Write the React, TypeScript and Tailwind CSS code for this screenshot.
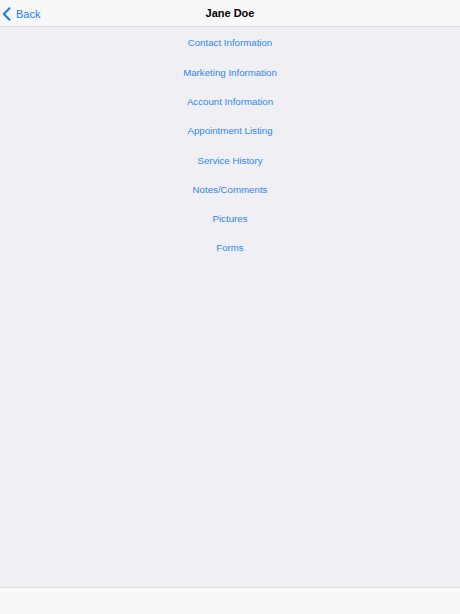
const items = [
  'Contact Information',
  'Marketing Information',
  'Account Information',
  'Appointment Listing',
  'Service History',
  'Notes/Comments',
  'Pictures',
  'Forms',
];

export default function App() {
  return (
    <div className="flex h-[614px] w-[460px] flex-col bg-[#efeff4] font-['Liberation_Sans',Arial,sans-serif]">
      {/* Nav bar */}
      <div className="relative flex h-[27px] shrink-0 items-center justify-center border-b border-[#dcdcde] bg-[#f8f8f8] pt-[1px]">
        <button className="absolute left-[2px] top-[1px] flex h-[26px] items-center gap-[5px] text-[11px] text-[#1a7cf5]">
          <svg width="9" height="14" viewBox="0 0 9 14" fill="none">
            <path d="M7.5 1.2 1.8 7l5.7 5.8" stroke="#1a7cf5" strokeWidth="2" strokeLinecap="round" strokeLinejoin="round" />
          </svg>
          Back
        </button>
        <span className="text-[11px] font-bold text-black">Jane Doe</span>
      </div>

      {/* Menu list */}
      <div className="flex flex-1 flex-col items-center pt-[2px]">
        {items.map((label) => (
          <div key={label} className="flex h-[29.3px] items-center text-[9.7px] text-[#2f87f0]">
            {label}
          </div>
        ))}
      </div>

      {/* Toolbar */}
      <div className="h-[27px] shrink-0 border-t border-[#dcdcde] bg-[#f8f8f8]" />
    </div>
  );
}
